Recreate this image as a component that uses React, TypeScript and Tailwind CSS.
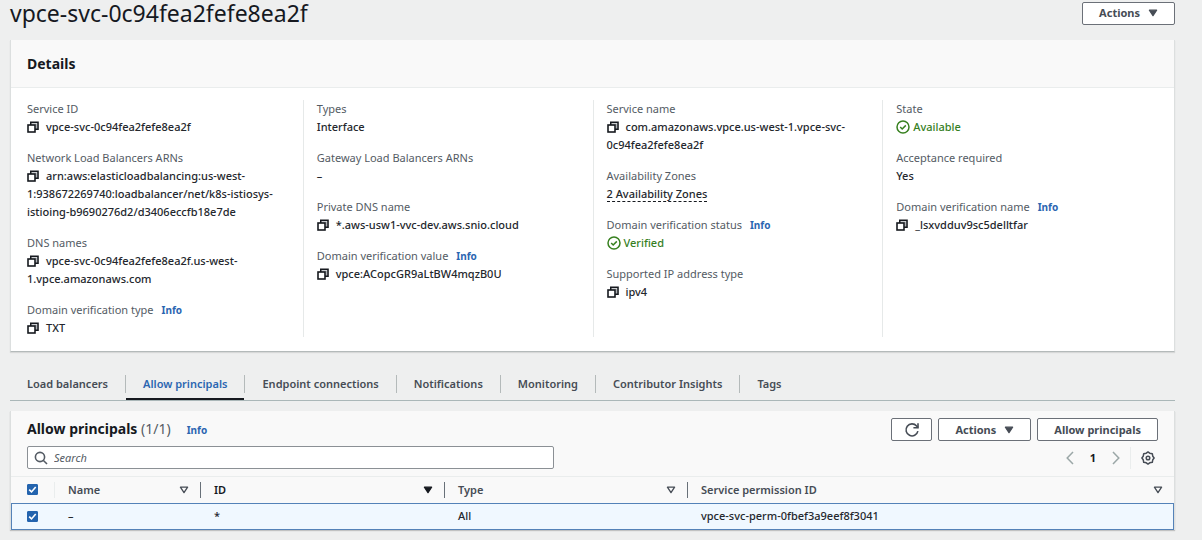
import { useState } from "react";
import type { ReactNode } from "react";

const CopyIcon = () => (
  <svg viewBox="0 0 12 12" className="h-3 w-3" fill="none" stroke="#16191f" strokeWidth="1.6">
    <path d="M4.8 3h4.4v5" stroke="#9a9ea3" strokeWidth="1.2" />
    <path d="M3.8 4V1.2H11v7H8" />
    <rect x="1" y="4" width="7" height="7" />
  </svg>
);

const CheckIcon = () => (
  <svg viewBox="0 0 14 14" className="h-[14px] w-[14px]" fill="none" stroke="currentColor" strokeWidth="1.5">
    <circle cx="7" cy="7" r="6" />
    <path d="M4.2 7l2 2 3.6-3.6" />
  </svg>
);

const Caret = ({ filled = true }: { filled?: boolean }) => (
  <svg viewBox="0 0 10 8" className="h-2 w-[10px]" stroke="currentColor" strokeWidth="1.3" strokeLinejoin="round" fill={filled ? "currentColor" : "none"}>
    <path d="M1.4 1.2h7.2L5 6.6z" />
  </svg>
);

const RefreshIcon = () => (
  <svg viewBox="0 0 16 16" className="h-4 w-4" fill="none" stroke="currentColor" strokeWidth="1.6">
    <path d="M13.9 9.2A6 6 0 1 1 12.6 4l1.4 1.6" />
    <path d="M14 1.2v4.6H9.4" />
  </svg>
);

const SearchIcon = () => (
  <svg viewBox="0 0 14 14" className="h-[14px] w-[14px] shrink-0" fill="none" stroke="#545b64" strokeWidth="1.6">
    <circle cx="6" cy="6" r="4.6" />
    <path d="M9.2 9.2l3.8 3.8" />
  </svg>
);

const GearIcon = () => (
  <svg viewBox="0 0 14 14" className="h-[14px] w-[14px]" fill="none" stroke="currentColor" strokeWidth="1.5" strokeLinejoin="round">
    <path d="M7 .9l1.7 1.3 2.6.5.5 2.6L13.1 7l-1.3 1.7-.5 2.6-2.6.5L7 13.1l-1.7-1.3-2.6-.5-.5-2.6L.9 7l1.3-1.7.5-2.6 2.6-.5z" />
    <circle cx="7" cy="7" r="1.8" />
  </svg>
);

const Chevron = ({ left = false }: { left?: boolean }) => (
  <svg viewBox="0 0 8 14" className="h-[14px] w-2" fill="none" stroke="#9ba7a7" strokeWidth="1.5">
    <path d={left ? "M7 1L1.2 7 7 13" : "M1 1l5.8 6L1 13"} />
  </svg>
);

const Info = ({ className = "ml-2" }: { className?: string }) => (
  <a href="#" className={`text-[10px] font-bold text-[#2b66b1] ${className}`}>
    Info
  </a>
);

const Button = ({ children, className = "px-4", label }: { children: ReactNode; className?: string; label?: string }) => (
  <button
    type="button"
    aria-label={label}
    className={`flex h-[23px] items-center justify-center gap-2 rounded-[2px] border border-[#6b7078] bg-white font-bold text-[#464c55] ${className}`}
  >
    {children}
  </button>
);

interface FieldProps {
  label: string;
  info?: boolean;
  copy?: boolean;
  children: ReactNode;
}

const Field = ({ label, info, copy, children }: FieldProps) => (
  <div>
    <dt className="text-[#545b64]">
      {label}
      {info && <Info />}
    </dt>
    <dd className="font-medium whitespace-pre-line text-[#24272d]">
      {copy && (
        <button type="button" aria-label={`Copy ${label}`} className="mr-[7px] inline-block align-[-2px]">
          <CopyIcon />
        </button>
      )}
      {children}
    </dd>
  </div>
);

const Status = ({ children }: { children: ReactNode }) => (
  <span className="flex items-center gap-[3px] text-[#37801f]">
    <CheckIcon />
    {children}
  </span>
);

const Column = ({ children }: { children: ReactNode }) => (
  <dl className="flex flex-col gap-[13px] border-l border-[#e6e9e9] pl-[13px] first:border-transparent">{children}</dl>
);

const tabs = [
  "Load balancers",
  "Allow principals",
  "Endpoint connections",
  "Notifications",
  "Monitoring",
  "Contributor Insights",
  "Tags",
];

const headers = ["Name", "ID", "Type", "Service permission ID"];

const Checkbox = ({ label, checked, onChange }: { label: string; checked: boolean; onChange: () => void }) => (
  <label className="relative ml-4 block h-[11px] w-[11px]">
    <input
      type="checkbox"
      aria-label={label}
      checked={checked}
      onChange={onChange}
      className="peer block h-[11px] w-[11px] appearance-none rounded-[1px] border border-[#687078] bg-white checked:border-[#2464ae] checked:bg-[#2464ae]"
    />
    <svg viewBox="0 0 11 11" className="pointer-events-none absolute inset-0 hidden peer-checked:block" fill="none" stroke="white" strokeWidth="1.6">
      <path d="M2.2 5.6l2.3 2.3 4.2-5" />
    </svg>
  </label>
);

export default function App() {
  const [activeTab, setActiveTab] = useState("Allow principals");
  const [search, setSearch] = useState("");
  const [selected, setSelected] = useState(true);
  const toggle = () => setSelected(!selected);

  return (
    <div className="min-h-screen bg-[#eeefef] pr-[27px] pl-[10px] font-['Noto_Sans',sans-serif] text-[11px] leading-[18px] text-[#16191f]">
      <header className="mb-[14px] flex items-center justify-between">
        <h1 className="text-[23px] leading-[26px]">vpce-svc-0c94fea2fefe8ea2f</h1>
        <Button>
          Actions <Caret />
        </Button>
      </header>

      {/* 상세 정보 */}
      <section className="border-x border-b border-x-[#dcdfdf] border-b-[#b4baba] bg-white shadow-[0_1px_1px_#00000018]">
        <h2 className="border-b border-[#eaeded] bg-[#f9f9f9] px-4 py-[14px] text-[14px] leading-[19px] font-bold">
          Details
        </h2>
        <div className="grid grid-cols-4 px-[2px] pt-3 pb-[14px]">
          <Column>
            <Field label="Service ID" copy>
              vpce-svc-0c94fea2fefe8ea2f
            </Field>
            <Field label="Network Load Balancers ARNs" copy>
              {"arn:aws:elasticloadbalancing:us-west-\n1:938672269740:loadbalancer/net/k8s-istiosys-\nistioing-b9690276d2/d3406eccfb18e7de"}
            </Field>
            <Field label="DNS names" copy>
              {"vpce-svc-0c94fea2fefe8ea2f.us-west-\n1.vpce.amazonaws.com"}
            </Field>
            <Field label="Domain verification type" info copy>
              TXT
            </Field>
          </Column>
          <Column>
            <Field label="Types">Interface</Field>
            <Field label="Gateway Load Balancers ARNs">–</Field>
            <Field label="Private DNS name" copy>
              *.aws-usw1-vvc-dev.aws.snio.cloud
            </Field>
            <Field label="Domain verification value" info copy>
              vpce:ACopcGR9aLtBW4mqzB0U
            </Field>
          </Column>
          <Column>
            <Field label="Service name" copy>
              {"com.amazonaws.vpce.us-west-1.vpce-svc-\n0c94fea2fefe8ea2f"}
            </Field>
            <Field label="Availability Zones">
              <button type="button" className="border-b border-dashed border-[#16191f] leading-[14px]">
                2 Availability Zones
              </button>
            </Field>
            <Field label="Domain verification status" info>
              <Status>Verified</Status>
            </Field>
            <Field label="Supported IP address type" copy>
              ipv4
            </Field>
          </Column>
          <Column>
            <Field label="State">
              <Status>Available</Status>
            </Field>
            <Field label="Acceptance required">Yes</Field>
            <Field label="Domain verification name" info copy>
              _lsxvdduv9sc5delltfar
            </Field>
          </Column>
        </div>
      </section>

      {/* 탭 */}
      <nav className="mt-[15px] mb-[10px] flex border-b border-[#aab7b8]">
        {tabs.map((tab, i) => (
          <div key={tab} className="flex">
            {i > 0 && <span className="mt-2 h-[18px] w-px bg-[#b4baba]" />}
            <button
              type="button"
              onClick={() => setActiveTab(tab)}
              className={`border-b-2 px-[17px] pt-2 pb-[5px] font-semibold ${
                tab === activeTab ? "border-[#16191f] text-[#2b66b1]" : "border-transparent text-[#464c55]"
              }`}
            >
              {tab}
            </button>
          </div>
        ))}
      </nav>

      {/* 허용된 보안 주체 */}
      <section className="border-x border-[#dcdfdf] bg-[#f9f9f9] shadow-[0_1px_1px_#00000030]">
        <div className="px-4 py-[7px]">
          <div className="mb-[5px] flex items-center justify-between">
            <h2 className="text-[14px] font-bold">
              Allow principals <span className="font-normal text-[#545b64]">(1/1)</span>
              <Info className="ml-4" />
            </h2>
            <div className="flex gap-[6px]">
              <Button className="w-[41px]" label="Refresh">
                <RefreshIcon />
              </Button>
              <Button>
                Actions <Caret />
              </Button>
              <Button>Allow principals</Button>
            </div>
          </div>
          <div className="flex items-center justify-between">
            <label className="flex h-[23px] w-[527px] items-center gap-[6px] rounded-[2px] border border-[#8b9095] bg-white px-[6px]">
              <SearchIcon />
              <input
                type="text"
                aria-label="Search"
                placeholder="Search"
                value={search}
                onChange={(e) => setSearch(e.target.value)}
                className="w-full outline-none placeholder:text-[#545b64] placeholder:italic"
              />
            </label>
            <div className="flex items-center pr-[3px]">
              <button type="button" aria-label="Previous page">
                <Chevron left />
              </button>
              <span className="w-[38px] text-center font-bold">1</span>
              <button type="button" aria-label="Next page">
                <Chevron />
              </button>
              <span className="mx-[10px] h-[22px] w-px bg-[#eaeded]" />
              <button type="button" aria-label="Settings" className="text-[#464c55]">
                <GearIcon />
              </button>
            </div>
          </div>
        </div>

        <table className="w-full table-fixed border-collapse text-left">
          <colgroup>
            <col className="w-[43px]" />
            <col className="w-[146px]" />
            <col className="w-[244px]" />
            <col className="w-[243px]" />
            <col />
          </colgroup>
          <thead>
            <tr className="h-[26px] border-t border-[#eaeded]">
              <th className="p-0">
                <Checkbox label="Select all" checked={selected} onChange={toggle} />
              </th>
              {headers.map((name, i) => (
                <th key={name} className="p-0 font-semibold text-[#464c55]">
                  <div
                    className={`flex h-4 items-center justify-between border-l pr-[11px] pl-[13px] ${
                      i === 0 ? "border-[#eaeded]" : "border-[#687078]"
                    } ${name === "ID" ? "text-[#16191f]" : ""}`}
                  >
                    {name}
                    <button type="button" aria-label={`Sort by ${name}`}>
                      <Caret filled={name === "ID"} />
                    </button>
                  </div>
                </th>
              ))}
            </tr>
          </thead>
          <tbody>
            <tr className="h-[27px] bg-[#f0f8ff] font-medium text-[#24272d] outline-1 -outline-offset-1 outline-[#5482b8]">
              <td className="p-0">
                <Checkbox label="Select row" checked={selected} onChange={toggle} />
              </td>
              <td className="p-0 pl-[14px]">–</td>
              <td className="p-0 pl-[14px]">*</td>
              <td className="p-0 pl-[14px]">All</td>
              <td className="p-0 pl-[14px]">vpce-svc-perm-0fbef3a9eef8f3041</td>
            </tr>
          </tbody>
        </table>
      </section>
    </div>
  );
}
